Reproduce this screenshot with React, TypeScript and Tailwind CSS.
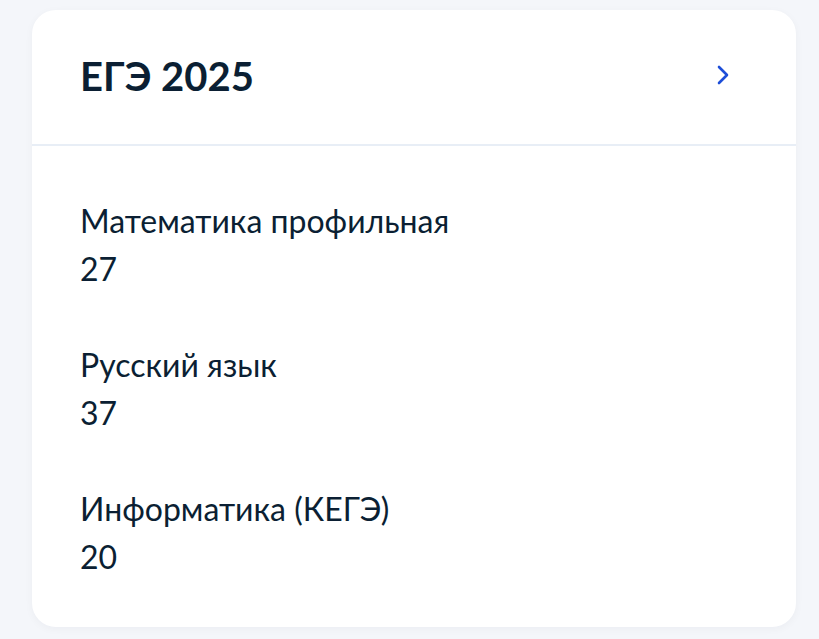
export default function App() {
  const rows = [
    { label: "Математика профильная", value: "27" },
    { label: "Русский язык", value: "37" },
    { label: "Информатика (КЕГЭ)", value: "20" },
  ];
  return (
    <div
      className="min-h-[639px] w-full bg-[#f4f6fa] px-[32px] pt-[10px] pb-[12px]"
      style={{ fontFamily: "Lato, 'Noto Sans', sans-serif" }}
    >
      <div className="w-[764px] h-[617px] rounded-[24px] bg-white shadow-[0_2px_8px_rgba(11,31,51,0.04)] overflow-hidden flex flex-col">
        <div className="h-[136px] flex items-center justify-between pl-[48px] pr-[66px] border-b-2 border-[#e8eef6]">
          <h1 className="text-[40px] leading-[48px] font-bold text-[#0b1f33] mt-[-2px]">ЕГЭ 2025</h1>
          <svg width="14" height="20" viewBox="0 0 14 20" fill="none" className="mt-[-4px]">
            <path d="M3 2 L11 10 L3 18" stroke="#1d4ed8" strokeWidth="2.6" strokeLinecap="round" strokeLinejoin="round" />
          </svg>
        </div>
        <div className="flex flex-col gap-[48px] pl-[48px] pt-[51px]">
          {rows.map((r) => (
            <div key={r.label} className="flex flex-col text-[32px] leading-[48px] text-[#0b1f33]">
              <span>{r.label}</span>
              <span>{r.value}</span>
            </div>
          ))}
        </div>
      </div>
    </div>
  );
}
